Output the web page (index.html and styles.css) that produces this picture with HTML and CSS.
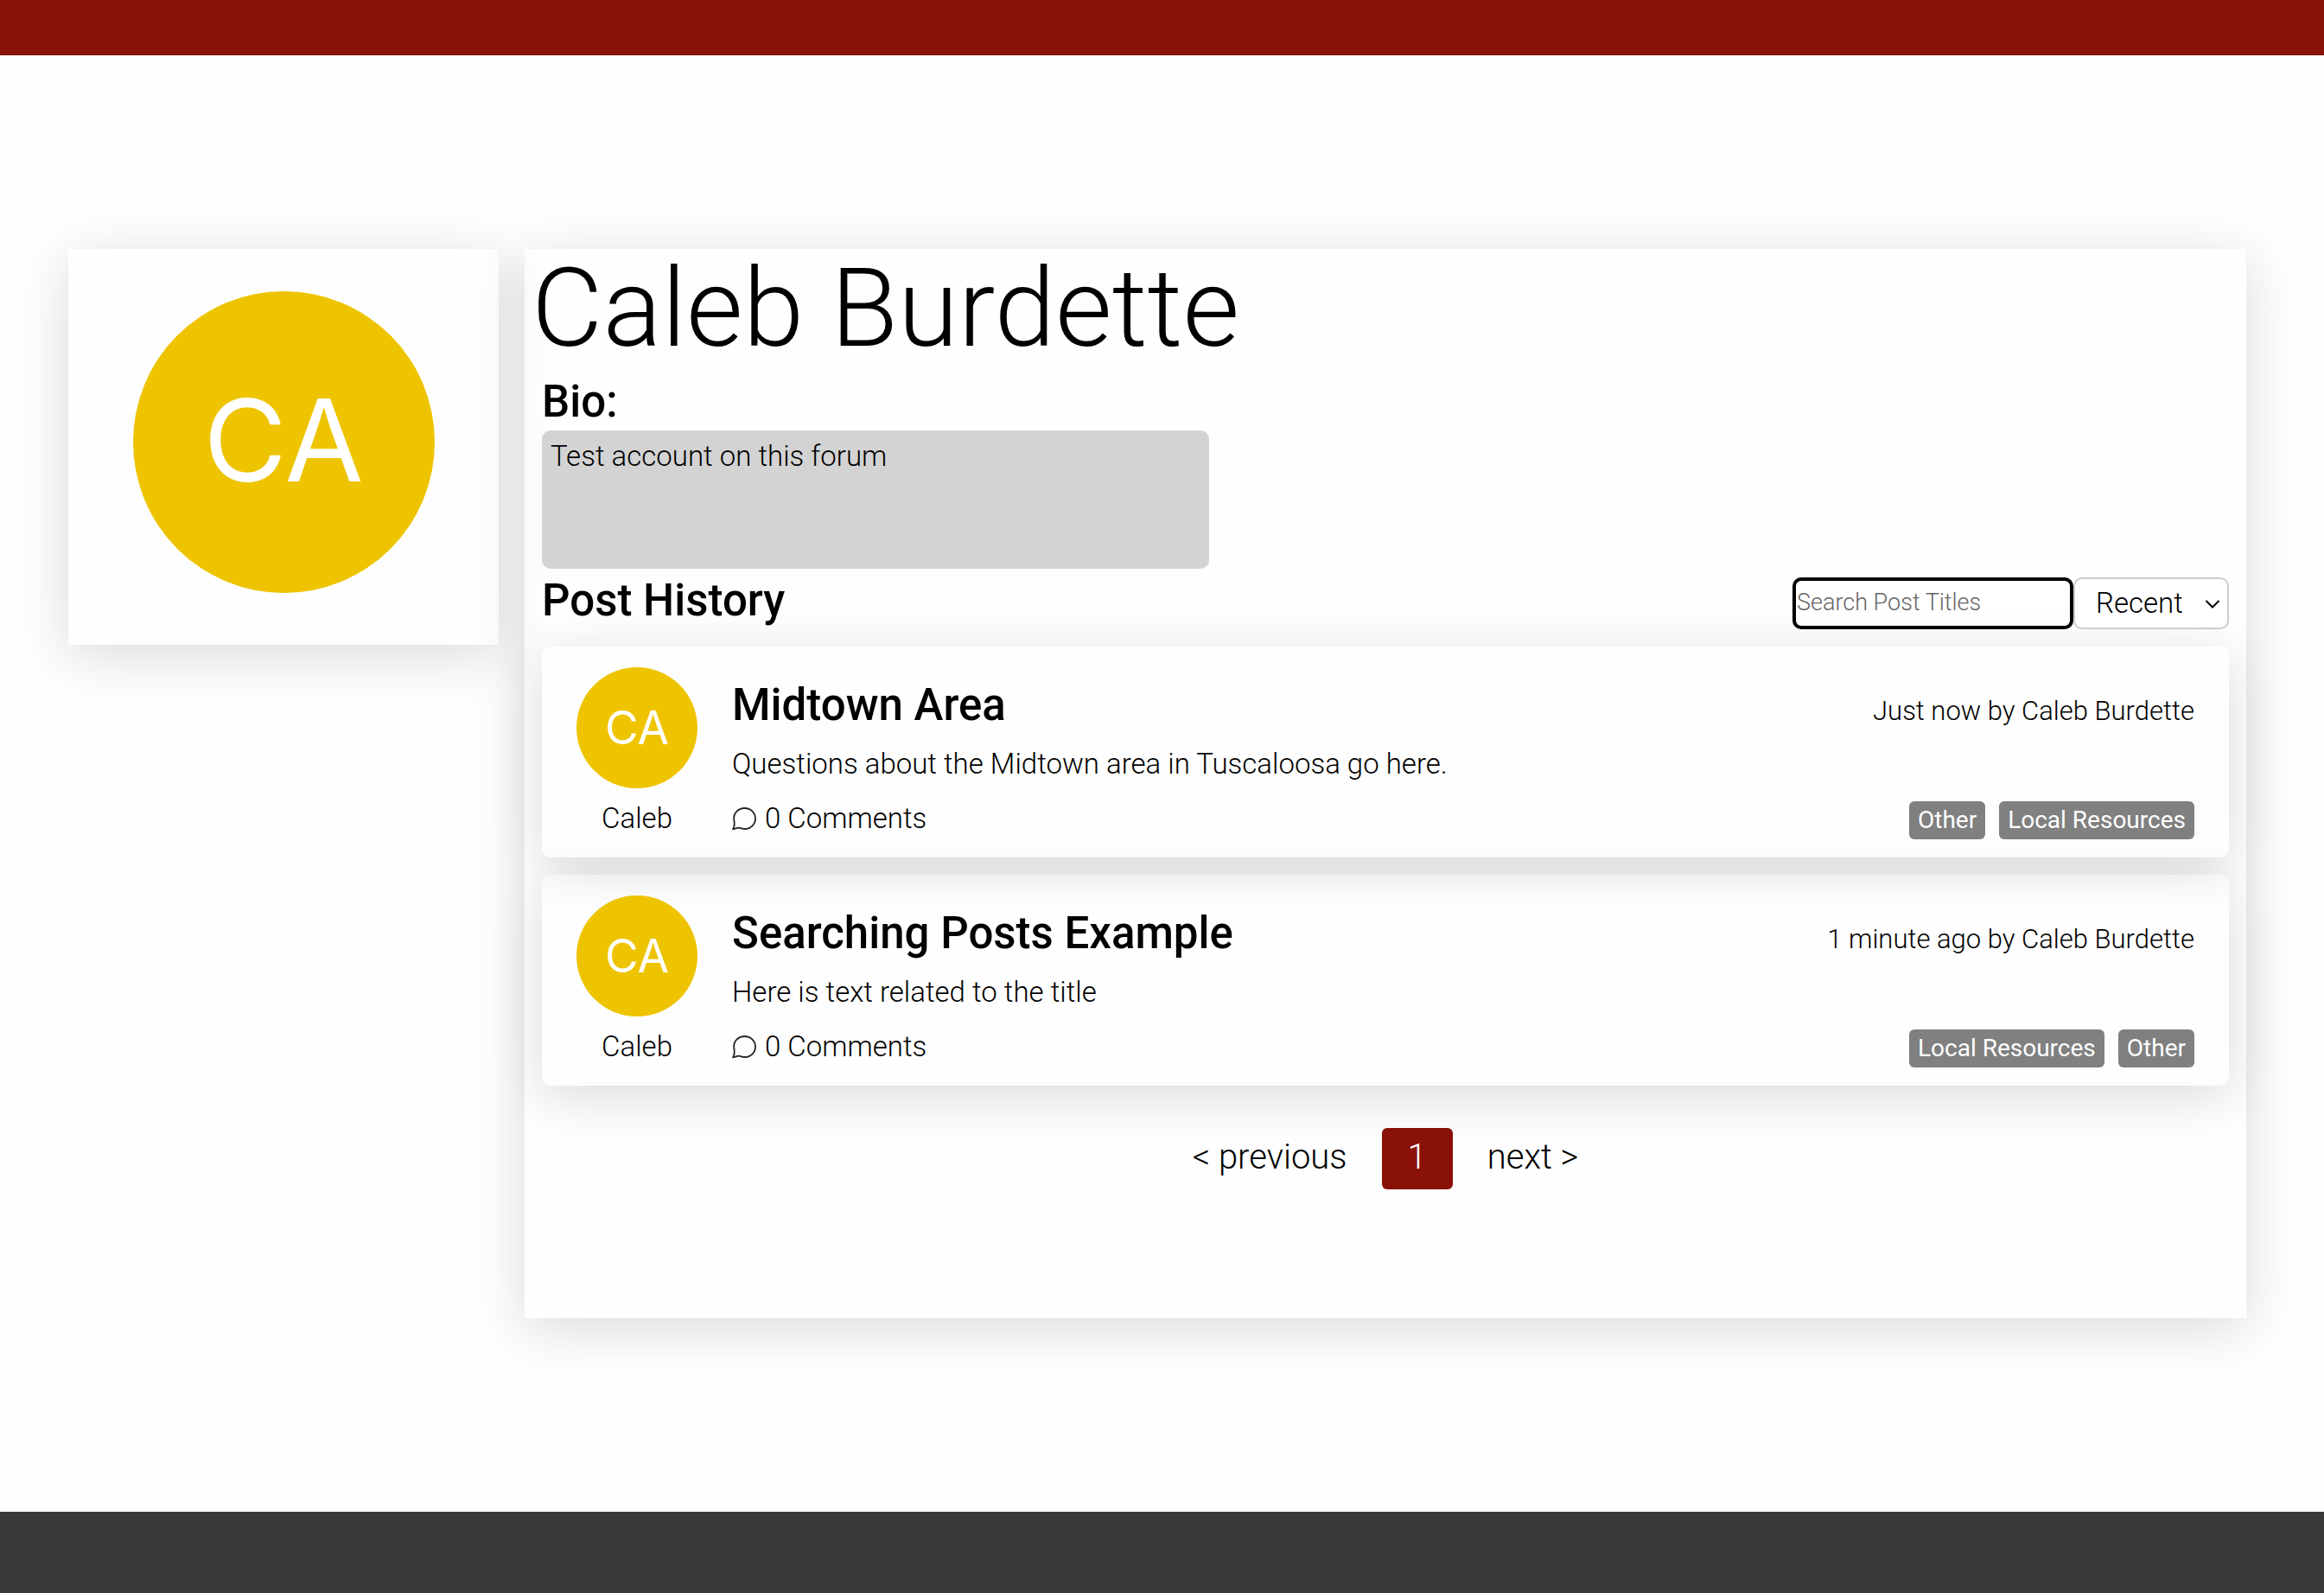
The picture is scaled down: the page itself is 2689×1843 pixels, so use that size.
FILE: index.html
```html
<!DOCTYPE html>
<html lang="en">
<head>
<meta charset="utf-8">
<title>Caleb Burdette</title>
<link rel="stylesheet" href="styles.css">
</head>
<body>
<header class="site-header"></header>
<main class="page">
  <aside class="profile-card">
    <div class="avatar avatar-large">CA</div>
  </aside>
  <section class="profile">
    <h1 class="profile-name">Caleb Burdette</h1>
    <h2 class="section-title">Bio:</h2>
    <p class="bio">Test account on this forum</p>
    <div class="history-bar">
      <h2 class="section-title">Post History</h2>
      <form class="filters">
        <input class="search" type="search" placeholder="Search Post Titles" aria-label="Search Post Titles">
        <div class="sort">
          <select class="sort-select" aria-label="Sort posts">
            <option>Recent</option>
            <option>Oldest</option>
          </select>
          <svg class="sort-arrow" viewBox="0 0 18 12" aria-hidden="true"><path d="M1.5 2 9 9.5 16.5 2"/></svg>
        </div>
      </form>
    </div>
    <div class="posts">
      <article class="post">
        <div class="author">
          <div class="avatar">CA</div>
          <span>Caleb</span>
        </div>
        <div class="post-body">
          <div class="post-head">
            <h3 class="post-title">Midtown Area</h3>
            <span class="post-meta">Just now by Caleb Burdette</span>
          </div>
          <p class="post-text">Questions about the Midtown area in Tuscaloosa go here.</p>
          <div class="post-foot">
            <span class="comments"><svg class="bubble" viewBox="0 0 28 27" aria-hidden="true"><path d="M1 25.3C3.4 22 3 18 2.2 14 1.6 6.5 7.5 1 14.5 1 22 1 27 6.5 27 13c0 7-5.5 12-12 12-4 0-6-1.8-8-1.4-2 .6-4 1.4-6 1.7Z"/></svg>0 Comments</span>
            <ul class="tags"><li class="tag">Other</li><li class="tag">Local Resources</li></ul>
          </div>
        </div>
      </article>
      <article class="post">
        <div class="author">
          <div class="avatar">CA</div>
          <span>Caleb</span>
        </div>
        <div class="post-body">
          <div class="post-head">
            <h3 class="post-title">Searching Posts Example</h3>
            <span class="post-meta">1 minute ago by Caleb Burdette</span>
          </div>
          <p class="post-text">Here is text related to the title</p>
          <div class="post-foot">
            <span class="comments"><svg class="bubble" viewBox="0 0 28 27" aria-hidden="true"><path d="M1 25.3C3.4 22 3 18 2.2 14 1.6 6.5 7.5 1 14.5 1 22 1 27 6.5 27 13c0 7-5.5 12-12 12-4 0-6-1.8-8-1.4-2 .6-4 1.4-6 1.7Z"/></svg>0 Comments</span>
            <ul class="tags"><li class="tag">Local Resources</li><li class="tag">Other</li></ul>
          </div>
        </div>
      </article>
    </div>
    <nav class="pager" aria-label="Pages">
      <a class="pager-link" href="#previous">&lt; previous</a>
      <a class="pager-link pager-current" href="#page-1" aria-current="page">1</a>
      <a class="pager-link" href="#next">next &gt;</a>
    </nav>
  </section>
</main>
<footer class="site-footer"></footer>
</body>
</html>
```
FILE: styles.css
```css
* {
  box-sizing: border-box;
}

body {
  margin: 0;
  min-height: 100vh;
  display: flex;
  flex-direction: column;
  background: #fefefe;
  color: #000;
  font: 300 33px/40px Roboto, "Liberation Sans", sans-serif;
}

h1, h2, h3, p, ul {
  margin: 0;
  padding: 0;
}

.site-header {
  height: 64px;
  background: #8a1108;
}

.site-footer {
  height: 94px;
  background: #3a3a3a;
}

.page {
  flex: 1;
  display: grid;
  grid-template-columns: minmax(0, 1fr) minmax(0, 4fr);
  align-items: start;
  gap: 30px;
  padding: 224px 90px 224px 79px;
}

.profile-card,
.profile,
.post {
  box-shadow: 0 12px 60px rgba(0, 0, 0, 0.14);
}

.profile-card {
  display: flex;
  justify-content: center;
  padding: 49px 20px 60px;
}

.avatar {
  display: flex;
  align-items: center;
  justify-content: center;
  width: 140px;
  height: 140px;
  border-radius: 50%;
  background: #eec400;
  color: #fff;
  font: 400 53px/60px Inter, sans-serif;
}

.avatar-large {
  width: 349px;
  height: 349px;
  padding-bottom: 6px;
  font-size: 132px;
}

.profile {
  padding: 0 20px 149px;
}

.profile-name {
  margin: 0 -12px 12px;
  font-size: 127px;
  line-height: 138px;
  font-weight: 300;
}

.section-title {
  font-size: 51px;
  line-height: 54px;
  font-weight: 500;
}

.bio {
  width: 772px;
  max-width: 100%;
  min-height: 160px;
  margin: 6px 0 10px;
  padding: 10px;
  border-radius: 10px;
  background: #d3d3d3;
}

.history-bar {
  display: flex;
  justify-content: space-between;
  align-items: flex-start;
  margin-bottom: 20px;
}

.filters {
  display: flex;
}

.search {
  width: 325px;
  height: 60px;
  padding: 0 1px 2px;
  border: 4px solid #000;
  border-radius: 10px;
  background: #fff;
  font: inherit;
  font-size: 27px;
  appearance: none;
}

.search::placeholder {
  color: #666;
}

.sort {
  position: relative;
}

.sort-select {
  width: 180px;
  height: 60px;
  padding: 0 40px 0 24px;
  border: 2px solid #ccc;
  border-radius: 10px;
  background: #fff;
  color: #000;
  font: inherit;
  appearance: none;
}

.sort-arrow {
  position: absolute;
  top: 25px;
  right: 10px;
  width: 18px;
  height: 12px;
  fill: none;
  stroke: #000;
  stroke-width: 2;
  pointer-events: none;
}

.posts {
  display: grid;
  gap: 20px;
}

.post {
  display: flex;
  gap: 40px;
  padding: 24px 40px 20px;
  border-radius: 10px;
}

.author {
  display: flex;
  flex-direction: column;
  align-items: center;
  gap: 15px;
  padding-bottom: 5px;
}

.post-body {
  flex: 1;
  padding-top: 14px;
}

.post-head {
  display: flex;
  justify-content: space-between;
  align-items: baseline;
  gap: 20px;
}

.post-title {
  font-size: 51px;
  line-height: 60px;
  font-weight: 500;
}

.post-meta {
  font-size: 31px;
}

.post-text {
  margin: 18px 0 23px;
}

.post-foot {
  display: flex;
  justify-content: space-between;
  align-items: flex-start;
}

.comments {
  display: flex;
  align-items: center;
  gap: 10px;
}

.bubble {
  width: 28px;
  height: 27px;
  fill: none;
  stroke: #222;
  stroke-width: 1.8;
  stroke-linejoin: round;
}

.tags {
  display: flex;
  gap: 16px;
  list-style: none;
}

.tag {
  padding: 2px 10px;
  border-radius: 6px;
  background: #808080;
  color: #fff;
  font-size: 28px;
  font-weight: 400;
}

.pager {
  display: flex;
  justify-content: center;
  gap: 40px;
  margin-top: 49px;
}

.pager-link {
  padding-bottom: 4px;
  color: #000;
  font-size: 40px;
  line-height: 67px;
  text-decoration: none;
}

.pager-current {
  padding: 0 30px 4px;
  border-radius: 6px;
  background: #8a1108;
  color: #fff;
}
```
